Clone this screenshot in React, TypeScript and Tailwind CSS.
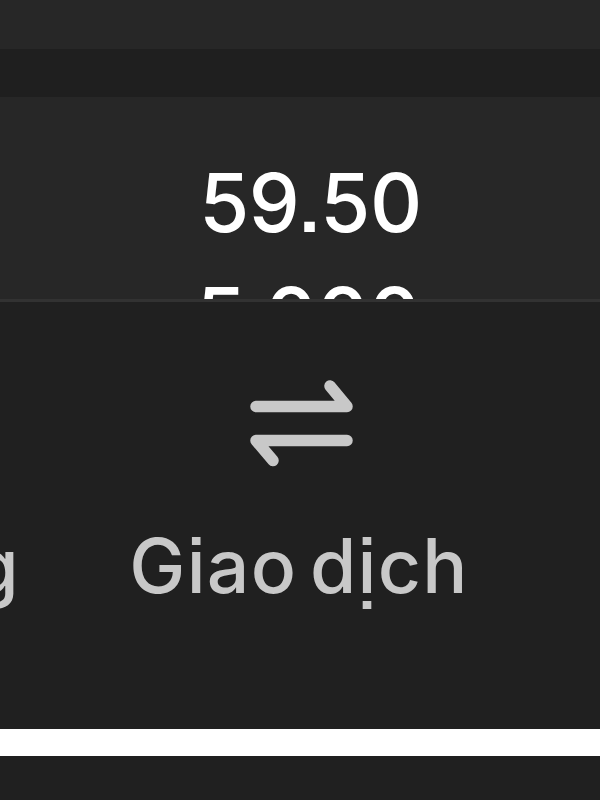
import { ReactNode } from "react";

type Tab = {
  id: string;
  label: string;
  className: string;
  icon?: ReactNode;
};

// 2本の片矢印アイコン
function TransferIcon() {
  return (
    <svg
      width="108"
      height="92"
      viewBox="0 0 108 92"
      fill="none"
      stroke="#c8c8c8"
      strokeWidth={11.5}
      strokeLinecap="round"
      strokeLinejoin="round"
    >
      <path d="M11 28.5H102L85 8" />
      <path d="M102 62.5H11L28 82.5" />
    </svg>
  );
}

const values = ["59.50", "5.000"];

const tabs: Tab[] = [
  { id: "left", label: "g", className: "w-[20px] items-end" },
  {
    id: "trade",
    label: "Giao dịch",
    className: "ml-[109px] w-[340px] items-center",
    icon: <TransferIcon />,
  },
];

export default function App() {
  return (
    <div className="flex h-[800px] w-[600px] flex-col overflow-hidden bg-[#202020] font-['Inter','Liberation_Sans',sans-serif] [font-feature-settings:'ss07']">
      <div className="h-[49px] shrink-0 bg-[#272727]" />
      <div className="h-12 shrink-0 bg-[#1f1f1f]" />

      {/* 数値リスト */}
      <ul className="h-[202px] shrink-0 overflow-hidden bg-[#272727] pt-[49px] pl-[21px] text-center">
        {values.map((value) => (
          <li
            key={value}
            className="h-[114px] text-[81px] leading-[114px] font-medium tracking-[-0.5px] text-white last:pr-[5px]"
          >
            {value}
          </li>
        ))}
      </ul>

      {/* タブバー */}
      <nav className="flex h-[430px] shrink-0 border-t-3 border-[#323232] bg-[#202020] pt-[76px]">
        {tabs.map((tab) => (
          <button
            key={tab.id}
            className={`flex shrink-0 flex-col text-[75px] leading-[90px] font-medium tracking-[1.25px] text-[#c8c8c8] [word-spacing:-8.5px] [font-variation-settings:'opsz'_14] ${tab.className}`}
          >
            <span className="mb-[51px] h-[92px]">{tab.icon}</span>
            <span className="whitespace-nowrap">{tab.label}</span>
          </button>
        ))}
      </nav>

      <div className="h-[27px] shrink-0 bg-white" />
    </div>
  );
}
